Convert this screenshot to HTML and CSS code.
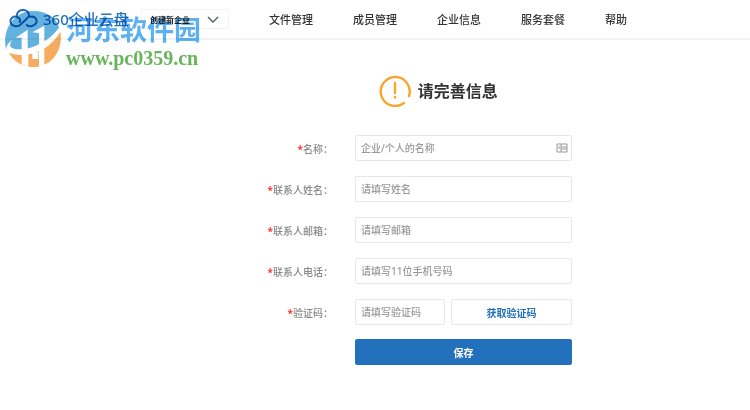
FILE: index.html
```html
<!DOCTYPE html>
<html lang="zh-CN">
<head>
  <meta charset="UTF-8">
  <meta name="viewport" content="width=device-width, initial-scale=1.0">
  <title>360企业云盘</title>
  <link rel="stylesheet" href="styles.css">
</head>
<body>
  <!-- 顶部导航 -->
  <header class="header">
    <a class="logo" href="#">
      <svg class="logo-icon" viewBox="0 0 84 60" aria-hidden="true">
        <path d="M34 46C26 55 3 54 3 37C3 26 13 20 22 24C20 9 32 2 43 3C54 4 60 13 58 22C51 31 41 39 34 46M50 46C58 56 77 52 81 39C83 28 73 20 60 24M22 24C31 26 34 34 30 41"/>
      </svg>
      <span class="logo-text">360企业云盘</span>
    </a>
    <div class="company">
      <select class="company-select" aria-label="企业">
        <option>创建新企业</option>
      </select>
      <svg class="company-arrow" viewBox="0 0 12 8" aria-hidden="true"><path d="M1 1L6 6L11 1"/></svg>
    </div>
    <nav class="nav">
      <a href="#">文件管理</a>
      <a href="#">成员管理</a>
      <a href="#">企业信息</a>
      <a href="#">服务套餐</a>
      <a href="#">帮助</a>
    </nav>
  </header>

  <!-- 水印 -->
  <div class="watermark">
    <svg class="watermark-icon" viewBox="0 0 168 168" aria-hidden="true">
      <path class="blue" d="M4 120C-12 55 28 0 85 0C125 0 155 20 162 50C135 88 85 114 45 115C22 116 12 108 16 98C17 93 20 88 24 84C6 98 2 110 4 120Z"/>
      <path class="orange" d="M12 126C70 144 135 118 166 62C176 120 137 168 86 168C53 168 26 152 12 126Z"/>
      <path class="white" d="M32 80L68 56V114H50V80ZM82 64L118 44V108L102 112V66ZM50 124H70V168L50 160ZM82 124H100V144H82ZM102 112H118V164L102 168Z"/>
    </svg>
    <div class="watermark-text">
      <span class="watermark-name">河东软件园</span>
      <span class="watermark-url">www.pc0359.cn</span>
    </div>
  </div>

  <main class="main">
    <h1 class="title">
      <svg class="title-icon" viewBox="0 0 32 32" aria-hidden="true">
        <path d="M25 28A14.5 14.5 0 1 1 30 21M16 8V18M16 22V22.5"/>
      </svg>
      请完善信息
    </h1>

    <form class="form">
      <div class="row">
        <label for="name"><i>*</i>名称：</label>
        <div class="field">
          <input id="name" class="input" type="text" placeholder="企业/个人的名称">
          <svg class="card-icon" viewBox="0 0 12 10" aria-hidden="true">
            <path d="M1 1H11V9H1ZM5 1V9M5 4H11M5 6H11M3 3V6"/>
          </svg>
        </div>
      </div>
      <div class="row">
        <label for="contact"><i>*</i>联系人姓名：</label>
        <input id="contact" class="input" type="text" placeholder="请填写姓名">
      </div>
      <div class="row">
        <label for="email"><i>*</i>联系人邮箱：</label>
        <input id="email" class="input" type="email" placeholder="请填写邮箱">
      </div>
      <div class="row">
        <label for="phone"><i>*</i>联系人电话：</label>
        <input id="phone" class="input" type="tel" placeholder="请填写11位手机号码">
      </div>
      <div class="row">
        <label for="code"><i>*</i>验证码：</label>
        <div class="code">
          <input id="code" class="input" type="text" placeholder="请填写验证码">
          <button class="code-button" type="button">获取验证码</button>
        </div>
      </div>
      <div class="row row-submit">
        <button class="save-button" type="submit">保存</button>
      </div>
    </form>
  </main>
</body>
</html>
```
FILE: styles.css
```css
* {
  box-sizing: border-box;
}
body {
  margin: 0;
  background: #fff;
  color: #333;
  font-family: "Noto Sans", "Noto Sans CJK SC", sans-serif;
  font-size: 10px;
}
a {
  color: inherit;
  text-decoration: none;
}
input,
select,
button {
  font-family: inherit;
}

/* 顶部导航 */
.header {
  display: flex;
  align-items: center;
  height: 40px;
  padding: 0 9px;
  border-bottom: 2px solid #f2f2f2;
}
.logo {
  display: flex;
  align-items: center;
  gap: 5px;
  width: 132px;
  color: #2573bd;
}
.logo-icon {
  width: 29px;
  height: 20px;
  fill: none;
  stroke: #1b6dbd;
  stroke-width: 6;
}
.logo-text {
  font-size: 15px;
  font-weight: 500;
  line-height: 20px;
  white-space: nowrap;
}
.company {
  position: relative;
  width: 88px;
}
.company-select {
  display: block;
  width: 100%;
  height: 20px;
  padding: 0 8px;
  border: 1px solid #f2f4f8;
  background: #fff;
  appearance: none;
  color: #222;
  font-size: 8px;
  font-weight: 700;
}
.company-arrow {
  position: absolute;
  top: 7px;
  right: 10px;
  width: 12px;
  height: 8px;
  fill: none;
  stroke: #555e6b;
  stroke-width: 1.4;
  pointer-events: none;
}
.nav {
  display: flex;
  gap: 40px;
  margin-left: 40px;
  font-size: 11px;
  font-weight: 500;
}

/* 水印 */
.watermark {
  position: absolute;
  top: 11px;
  left: 5px;
  display: flex;
  gap: 5px;
  mix-blend-mode: multiply;
  pointer-events: none;
}
.watermark-icon {
  width: 56px;
  height: 56px;
}
.blue {
  fill: #62b2e0;
}
.orange {
  fill: #f6ab60;
}
.white {
  fill: #fff;
}
.watermark-text {
  display: flex;
  flex-direction: column;
}
.watermark-name {
  color: #5cb1f2;
  font-size: 27px;
  font-weight: 700;
  line-height: 38px;
}
.watermark-url {
  color: #68b45b;
  font-family: "Liberation Serif", serif;
  font-size: 20px;
  font-weight: 700;
  line-height: 18px;
}

/* 标题 */
.main {
  padding-top: 35px;
}
.title {
  display: flex;
  align-items: center;
  gap: 7px;
  margin: 0 0 28px;
  padding-left: 50.5%;
  color: #333;
  font-size: 16px;
  font-weight: 700;
  line-height: 32px;
}
.title-icon {
  width: 32px;
  height: 32px;
  fill: none;
  stroke: #faa52d;
  stroke-width: 2.4;
  stroke-linecap: round;
}

/* 表单 */
.form {
  display: flex;
  flex-direction: column;
  gap: 15px;
}
.row {
  display: grid;
  grid-template-columns: 44.4% 217px;
  column-gap: 22px;
  align-items: center;
}
.row label {
  color: #888;
  font-weight: 500;
  text-align: right;
}
.row i {
  color: #f33;
  font-style: normal;
  font-weight: 700;
}
.row-submit {
  margin-top: -1px;
}
.field {
  position: relative;
}
.input {
  display: block;
  width: 100%;
  height: 26px;
  padding: 0 5px;
  border: 1px solid #e8e8e8;
  border-radius: 2px;
  color: #333;
  font-size: 10px;
}
.input::placeholder {
  color: #999;
  font-weight: 500;
}
.card-icon {
  position: absolute;
  top: 8px;
  right: 4px;
  width: 12px;
  height: 10px;
  fill: none;
  stroke: #999;
}
.code {
  display: grid;
  grid-template-columns: 90px 1fr;
  gap: 6px;
}
.code-button,
.save-button {
  height: 26px;
  padding: 0;
  border: 1px solid #e8e8e8;
  border-radius: 2px;
  background: #fff;
  color: #2371bd;
  font-size: 10px;
  font-weight: 700;
}
.save-button {
  grid-column: 2;
  border-color: #2371bd;
  background: #2371bd;
  color: #fff;
}
```
